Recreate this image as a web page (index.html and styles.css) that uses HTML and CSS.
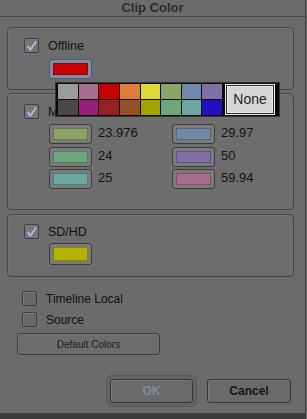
FILE: index.html
```html
<!DOCTYPE html>
<html lang="en">
<head>
    <meta charset="UTF-8">
    <title>Clip Color</title>
    <link rel="stylesheet" href="styles.css">
</head>
<body>
<div class="window">
    <div class="titlebar">Clip Color</div>

    <div class="content">
        <!-- Offline -->
        <div class="group group-offline">
            <div class="check-row">
                <span class="checkbox checked">
                    <svg width="13" height="13" viewBox="0 0 13 13"><path d="M2.5 7 L5.5 10.5 L11 2.5" fill="none" stroke="#9dbfe8" stroke-width="2"/></svg>
                </span>
                <span class="label">Offline</span>
            </div>
            <div class="swatch focused"><span style="background:#c80000"></span></div>
        </div>

        <!-- Frame rates -->
        <div class="group group-rates">
            <div class="check-row">
                <span class="checkbox checked">
                    <svg width="13" height="13" viewBox="0 0 13 13"><path d="M2.5 7 L5.5 10.5 L11 2.5" fill="none" stroke="#9dbfe8" stroke-width="2"/></svg>
                </span>
                <span class="label">Mixed Frame Rates</span>
            </div>
            <div class="rate-grid">
                <div class="rate"><div class="swatch"><span style="background:#8ca468"></span></div><span class="label">23.976</span></div>
                <div class="rate"><div class="swatch"><span style="background:#6f8aa8"></span></div><span class="label">29.97</span></div>
                <div class="rate"><div class="swatch"><span style="background:#6ca87c"></span></div><span class="label">24</span></div>
                <div class="rate"><div class="swatch"><span style="background:#8170a8"></span></div><span class="label">50</span></div>
                <div class="rate"><div class="swatch"><span style="background:#6ca8a0"></span></div><span class="label">25</span></div>
                <div class="rate"><div class="swatch"><span style="background:#a86d8c"></span></div><span class="label">59.94</span></div>
            </div>
        </div>

        <!-- SD/HD -->
        <div class="group group-sdhd">
            <div class="check-row">
                <span class="checkbox checked">
                    <svg width="13" height="13" viewBox="0 0 13 13"><path d="M2.5 7 L5.5 10.5 L11 2.5" fill="none" stroke="#9dbfe8" stroke-width="2"/></svg>
                </span>
                <span class="label">SD/HD</span>
            </div>
            <div class="swatch tall"><span style="background:#b4b400"></span></div>
        </div>

        <div class="plain-checks">
            <div class="check-row">
                <span class="checkbox"></span>
                <span class="label">Timeline Local</span>
            </div>
            <div class="check-row">
                <span class="checkbox"></span>
                <span class="label">Source</span>
            </div>
        </div>

        <button class="btn-default">Default Colors</button>

        <div class="actions">
            <span class="focus-ring"><button class="btn btn-ok">OK</button></span>
            <button class="btn btn-cancel">Cancel</button>
        </div>
    </div>

    <div class="bottom-strip"></div>

    <!-- color picker popup -->
    <div class="palette">
        <div class="palette-cells">
            <span style="background:#9c9c9c"></span>
            <span style="background:#a86d8c"></span>
            <span style="background:#c80000"></span>
            <span style="background:#e07c3a"></span>
            <span style="background:#dcdc38"></span>
            <span style="background:#8ca468"></span>
            <span style="background:#6f8aa8"></span>
            <span style="background:#8170a8"></span>
            <span style="background:#484848"></span>
            <span style="background:#962078"></span>
            <span style="background:#962028"></span>
            <span style="background:#945228"></span>
            <span style="background:#a4a400"></span>
            <span style="background:#6ca87c"></span>
            <span style="background:#6ca8a0"></span>
            <span style="background:#2010c0"></span>
        </div>
        <div class="palette-none">None</div>
    </div>
</div>
</body>
</html>
```

FILE: styles.css
```css
body
{
    margin: 0;
    background-color: #6b6b6b;
    font-family: 'Liberation Sans', Arial, sans-serif;
    overflow: hidden;
}
.window
{
    position: relative;
    width: 305px;
    height: 419px;
    border-right: 1px solid #3c3c3c;
    display: flex;
    flex-direction: column;
}
.titlebar
{
    height: 16px;
    line-height: 16px;
    border-bottom: 1px solid #4a4a4a;
    text-align: center;
    font-weight: bold;
    font-size: 13px;
    color: #2e2e2e;
}
.content
{
    flex: 1;
    padding: 10px 11px 0 7px;
}
.group
{
    border: 1px solid #474747;
    border-radius: 4px;
    box-shadow: inset 1px 1px 0 #767676;
    background-color: #6d6d6d;
    padding: 10px 0 0 16px;
    box-sizing: border-box;
}
.group-offline
{
    height: 63px;
}
.group-rates
{
    height: 117px;
    margin-top: 3px;
}
.group-sdhd
{
    height: 63px;
    margin-top: 4px;
    padding-top: 9px;
}
.check-row
{
    display: flex;
    align-items: center;
    gap: 9px;
    height: 15px;
}
.label
{
    font-size: 12.5px;
    color: #121212;
    white-space: nowrap;
}
.checkbox
{
    width: 15px;
    height: 15px;
    box-sizing: border-box;
    border: 1px solid #3e3e3e;
    border-radius: 2px;
    background-color: #6e6e6e;
    box-shadow: inset 1px 1px 0 #7a7a7a;
    display: flex;
    align-items: center;
    justify-content: center;
    flex-shrink: 0;
}
.checkbox.checked
{
    background-color: #767676;
}
.swatch
{
    width: 43px;
    height: 20px;
    box-sizing: border-box;
    border: 1px solid #3c3c3c;
    border-radius: 3px;
    background-color: #7a7a7a;
    padding: 3px;
    display: flex;
}
.swatch span
{
    flex: 1;
    border: 1px solid rgba(0, 0, 0, 0.25);
}
.swatch.focused
{
    border-color: #4a5b72;
    background-color: #7d8da3;
}
.swatch.tall
{
    height: 22px;
}
.group-offline .swatch,
.group-sdhd .swatch
{
    margin: 6px 0 0 25px;
}
.group-sdhd .swatch
{
    margin-top: 4px;
}
.rate-grid
{
    display: grid;
    grid-template-columns: 123px 1fr;
    row-gap: 2.5px;
    margin: 5px 0 0 25px;
}
.rate
{
    display: flex;
    align-items: center;
    gap: 6px;
}
.rate .label
{
    font-size: 13px;
    margin-top: -3px;
}
.plain-checks
{
    display: flex;
    flex-direction: column;
    gap: 6px;
    padding: 14px 0 0 15px;
}
.plain-checks .label
{
    font-size: 12px;
}
.plain-checks .checkbox
{
    background-color: #686868;
}
.btn-default
{
    display: block;
    margin: 6px 0 0 10px;
    width: 143px;
    height: 22px;
    border: 1px solid #3e3e3e;
    border-radius: 3px;
    background-color: #6c6c6c;
    box-shadow: inset 1px 1px 0 #777;
    font-family: 'Liberation Sans', Arial, sans-serif;
    font-size: 10px;
    color: #1e1e1e;
    padding: 0;
}
.actions
{
    display: flex;
    justify-content: flex-end;
    align-items: center;
    gap: 10px;
    margin-top: 20px;
    padding-right: 3px;
}
.focus-ring
{
    display: flex;
    padding: 3px;
    border: 1px solid #5a5a5a;
    border-radius: 5px;
    background-color: #636363;
}
.btn
{
    height: 24px;
    border: 1px solid #373737;
    border-radius: 3px;
    background-color: #6a6a6a;
    box-shadow: inset 1px 1px 0 #787878;
    font-family: 'Liberation Sans', Arial, sans-serif;
    font-weight: bold;
    font-size: 12px;
    padding: 0;
}
.btn-ok
{
    width: 83px;
    color: #7d8da3;
}
.btn-cancel
{
    width: 84px;
    color: #161616;
}
.bottom-strip
{
    height: 6px;
    background-color: #3c3c3c;
}

/* popup palette over the groups */
.palette
{
    position: absolute;
    left: 55px;
    top: 82px;
    width: 225px;
    height: 35px;
    box-sizing: border-box;
    background-color: #0a0a0a;
    border: 1px solid #333;
    padding: 1px 2px;
    display: flex;
    gap: 3px;
}
.palette-cells
{
    display: grid;
    grid-template-columns: repeat(8, 1fr);
    grid-template-rows: 15px 15px;
    gap: 1px;
    width: 164px;
}
.palette-none
{
    flex: 1;
    box-sizing: border-box;
    background-color: #d6d6d6;
    border: 1px solid #ededed;
    box-shadow: inset 0 0 0 1px #2a2a2a, inset 0 0 0 2px #ececec;
    text-align: center;
    line-height: 29px;
    font-size: 14px;
    color: #262626;
    margin-right: 2px;
}
```
